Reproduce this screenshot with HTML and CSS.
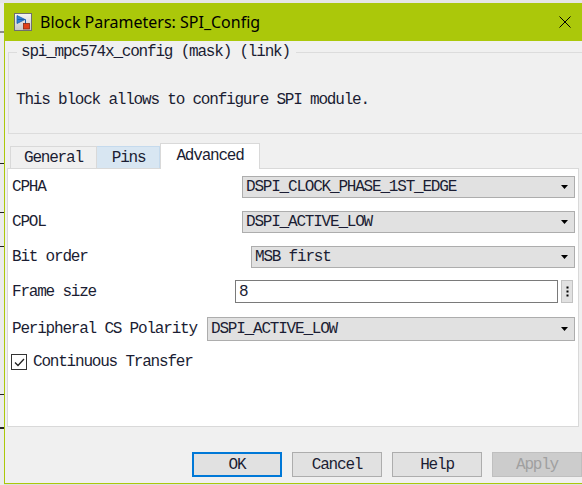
FILE: index.html
```html
<!DOCTYPE html>
<html>
<head>
<meta charset="utf-8">
<link rel="stylesheet" href="styles.css">
</head>
<body>
<div class="desk">
  <div class="topstrip"></div>
  <div class="bgwin">
    <span class="bgline gray"></span>
    <span class="bgline dark b1"></span>
    <span class="bgline dark b2"></span>
    <span class="bgline dark b3"></span>
    <span class="bgline dark b4"></span>
    <span class="bgline dark b5"></span>
  </div>
  <div class="window">
    <div class="titlebar">
      <svg class="appicon" width="18" height="18" viewBox="0 0 18 18">
        <defs>
          <linearGradient id="ig" x1="0" y1="0" x2="0" y2="1">
            <stop offset="0" stop-color="#f4f4f4"/>
            <stop offset="1" stop-color="#c9c9c9"/>
          </linearGradient>
        </defs>
        <rect x="0.5" y="0.5" width="17" height="17" fill="url(#ig)" stroke="#6f6f6f"/>
        <path d="M3 2.5 L11 6.5 L3 10.5 Z" fill="#2f7fd6" stroke="#1b5fa8" stroke-width="0.8"/>
        <path d="M3.5 6.5 H11.5 V11" fill="none" stroke="#1b5fa8" stroke-width="1"/>
        <rect x="9.5" y="10.5" width="6" height="5.5" fill="#e0401a" stroke="#8a2a10" stroke-width="0.8"/>
      </svg>
      <span class="title">Block Parameters: SPI_Config</span>
      <svg class="close" width="12" height="12" viewBox="0 0 12 12">
        <path d="M0.5 0.5 L11.5 11.5 M11.5 0.5 L0.5 11.5" stroke="#000" stroke-width="1" fill="none"/>
      </svg>
    </div>
    <div class="content mono">
      <div class="group">
        <div class="group-head"><span class="legend">spi_mpc574x_config (mask) (link)</span></div>
        <div class="group-body">This block allows to configure SPI module.</div>
      </div>
      <div class="tabs">
        <div class="tab first">General</div>
        <div class="tab hover">Pins</div>
        <div class="tab active">Advanced</div>
      </div>
      <div class="panel">
        <div class="rows">
          <div class="row">
            <span class="lbl w230">CPHA</span>
            <div class="dd"><span>DSPI_CLOCK_PHASE_1ST_EDGE</span><svg class="caret" width="7" height="4" viewBox="0 0 7 4"><path d="M0 0 H7 L3.5 4 Z" fill="#000"/></svg></div>
          </div>
          <div class="row">
            <span class="lbl w230">CPOL</span>
            <div class="dd"><span>DSPI_ACTIVE_LOW</span><svg class="caret" width="7" height="4" viewBox="0 0 7 4"><path d="M0 0 H7 L3.5 4 Z" fill="#000"/></svg></div>
          </div>
          <div class="row">
            <span class="lbl w239">Bit order</span>
            <div class="dd"><span>MSB first</span><svg class="caret" width="7" height="4" viewBox="0 0 7 4"><path d="M0 0 H7 L3.5 4 Z" fill="#000"/></svg></div>
          </div>
          <div class="row edit-row">
            <span class="lbl w223">Frame size</span>
            <div class="edit">8</div>
            <div class="more"><svg width="3" height="11" viewBox="0 0 3 11"><rect x="0.5" y="0.5" width="2" height="2" fill="#000"/><rect x="0.5" y="4.5" width="2" height="2" fill="#000"/><rect x="0.5" y="8.5" width="2" height="2" fill="#000"/></svg></div>
          </div>
          <div class="row pcs">
            <span class="lbl w195">Peripheral CS Polarity</span>
            <div class="dd"><span>DSPI_ACTIVE_LOW</span><svg class="caret" width="7" height="4" viewBox="0 0 7 4"><path d="M0 0 H7 L3.5 4 Z" fill="#000"/></svg></div>
          </div>
          <div class="row check-row">
            <span class="check"><svg width="13" height="13" viewBox="0 0 13 13"><path d="M2 6.5 L5 9.5 L11 3" stroke="#222" stroke-width="1.3" fill="none"/></svg></span>
            <span class="check-lbl">Continuous Transfer</span>
          </div>
        </div>
      </div>
      <div class="buttons">
        <div class="btn default">OK</div>
        <div class="btn">Cancel</div>
        <div class="btn">Help</div>
        <div class="btn disabled">Apply</div>
      </div>
    </div>
  </div>
</div>
</body>
</html>
```
FILE: styles.css
```css
html, body {
  margin: 0;
  padding: 0;
}
body {
  width: 582px;
  height: 485px;
  overflow: hidden;
  background: #dedede;
}
.desk {
  position: relative;
  width: 582px;
  height: 485px;
  overflow: hidden;
}
.topstrip {
  height: 3px;
  background: #e6e6e6;
}
.bgwin {
  position: absolute;
  left: 0;
  top: 3px;
  width: 4px;
  height: 482px;
  background: #ececec;
}
.bgline {
  position: absolute;
  left: 0;
  width: 4px;
  height: 1px;
}
.bgline.gray { top: 28px; height: 2px; background: #8c8c8c; }
.bgline.dark { background: #222; }
.b1 { top: 160px; }
.b2 { top: 209px; }
.b3 { top: 243px; }
.b4 { top: 391px; }
.b5 { top: 424px; height: 2px; }

.window {
  position: absolute;
  left: 4px;
  top: 3px;
  width: 578px;
  height: 481px;
  box-sizing: border-box;
  border-left: 1px solid #abc80a;
  border-bottom: 1px solid #abc80a;
  background: #f0f0f0;
  display: flex;
  flex-direction: column;
  overflow: hidden;
}
.titlebar {
  height: 38px;
  flex: none;
  background: #abc80a;
  display: flex;
  align-items: center;
  padding-left: 9px;
}
.appicon {
  flex: none;
  display: block;
}
.title {
  margin-left: 8px;
  font-family: "Noto Sans", "Open Sans", sans-serif;
  font-size: 16px;
  color: #000;
  white-space: nowrap;
}
.close {
  margin-left: auto;
  margin-right: 11px;
  display: block;
}

.mono {
  font-family: "Liberation Mono", monospace;
  font-size: 16px;
  letter-spacing: -1.2px;
  color: #1b1d33;
}
.content {
  display: flex;
  flex-direction: column;
  flex: 1;
}

/* group box */
.group {
  margin-left: 3px;
}
.group-head {
  height: 22px;
  display: flex;
  align-items: center;
}
.group-head::before {
  content: "";
  align-self: flex-end;
  width: 8px;
  height: 10px;
  border-top: 1px solid #dcdcdc;
  border-left: 1px solid #dcdcdc;
}
.group-head::after {
  content: "";
  flex: 1;
  height: 0;
  border-top: 1px solid #dcdcdc;
  margin-left: 6px;
  margin-top: 1px;
}
.legend {
  margin-left: 4px;
  line-height: 20px;
  white-space: nowrap;
}
.group-body {
  border-left: 1px solid #dcdcdc;
  border-bottom: 1px solid #dcdcdc;
  padding: 27px 0 23px 7px;
  line-height: 20px;
  white-space: nowrap;
}

/* tabs */
.tabs {
  display: flex;
  align-items: flex-end;
  height: 25px;
  margin: 9px 0 0 5px;
}
.tab {
  height: 22px;
  box-sizing: border-box;
  padding: 1px 14px 0;
  border: 1px solid #d9d9d9;
  border-bottom: 0;
  border-left: 0;
  background: #f0f0f0;
  display: flex;
  align-items: center;
  white-space: nowrap;
}
.tab.first {
  border-left: 1px solid #d9d9d9;
  padding: 1px 13px 0;
}
.tab.hover {
  background: #d8e6f2;
  border-color: #c5daed;
  padding: 1px 14px 0 15px;
}
.tab.active {
  height: 26px;
  margin-bottom: -1px;
  padding: 0 15px 1px;
  background: #fff;
  border: 1px solid #d9d9d9;
  border-bottom: 0;
  position: relative;
  z-index: 1;
}

/* panel */
.panel {
  margin-left: 2px;
  width: 572px;
  height: 259px;
  box-sizing: border-box;
  border: 1px solid #d9d9d9;
  background: #fff;
  padding: 6px 3px 0 4px;
}
.rows {
  display: flex;
  flex-direction: column;
  gap: 12px;
}
.row {
  display: flex;
  align-items: center;
  height: 23px;
}
.row.pcs {
  margin-top: 2px;
  height: 24px;
}
.row.pcs .dd {
  height: 24px;
}
.row.check-row {
  height: 16px;
  margin-top: 1px;
}
.lbl {
  flex: none;
  white-space: nowrap;
}
.w230 { width: 230px; }
.w239 { width: 239px; }
.w223 { width: 223px; }
.w195 { width: 195px; }

.dd {
  flex: 1;
  height: 22px;
  box-sizing: border-box;
  border: 1px solid #adadad;
  background: #e1e1e1;
  display: flex;
  align-items: center;
  justify-content: space-between;
  padding: 0 6px 0 3px;
  white-space: nowrap;
}
.caret {
  display: block;
  flex: none;
}
.edit-row {
  padding-right: 2px;
}
.edit {
  flex: 1;
  height: 23px;
  box-sizing: border-box;
  border: 1px solid #7a7a7a;
  background: #fff;
  padding-left: 3px;
  display: flex;
  align-items: center;
}
.more {
  flex: none;
  width: 12px;
  height: 23px;
  box-sizing: border-box;
  margin-left: 3px;
  border: 1px solid #c2c2c2;
  background: #e1e1e1;
  display: flex;
  align-items: center;
  justify-content: center;
}
.more svg { display: block; }
.check {
  flex: none;
  width: 16px;
  height: 16px;
  box-sizing: border-box;
  margin-left: -1px;
  border: 1px solid #333;
  background: #fff;
  display: flex;
  align-items: center;
  justify-content: center;
}
.check svg { display: block; }
.check-lbl {
  margin-left: 6px;
  white-space: nowrap;
}

/* buttons */
.buttons {
  display: flex;
  gap: 10px;
  margin-top: 25px;
  padding-left: 187px;
}
.btn {
  flex: none;
  width: 90px;
  height: 25px;
  box-sizing: border-box;
  border: 1px solid #adadad;
  background: #e1e1e1;
  display: flex;
  align-items: center;
  justify-content: center;
  white-space: nowrap;
}
.btn.default {
  border: 2px solid #0078d7;
}
.btn.disabled {
  background: #cccccc;
  border-color: #bfbfbf;
  color: #a0a0a0;
}
```
